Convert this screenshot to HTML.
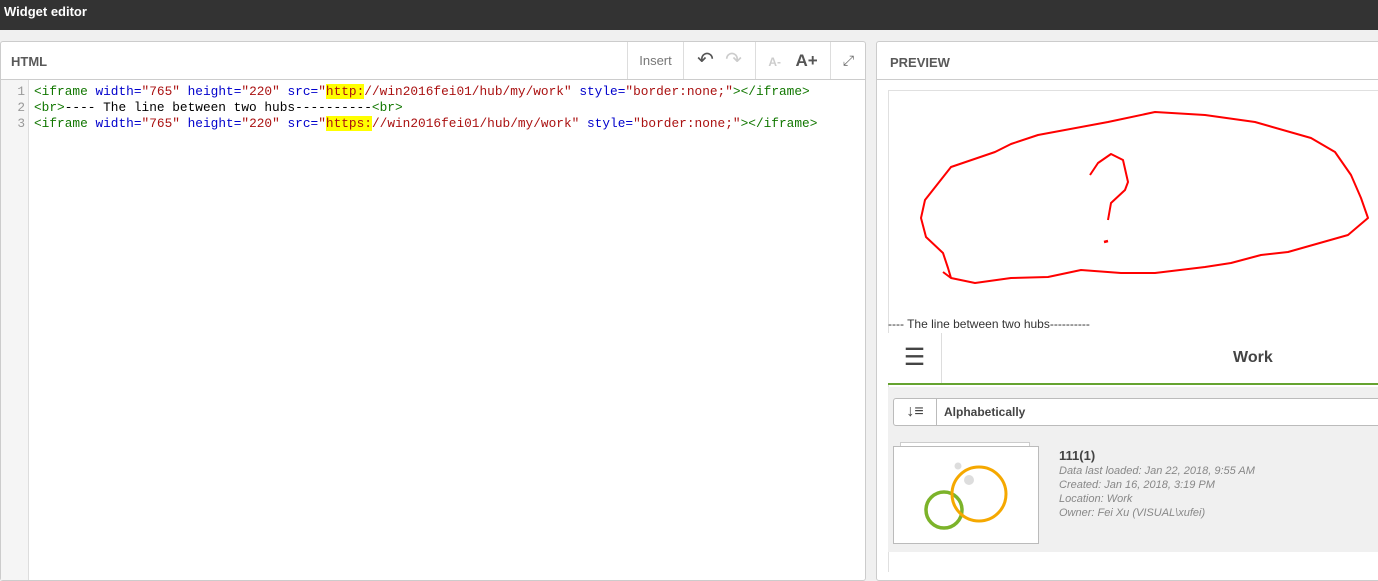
<!DOCTYPE html>
<html><head><meta charset="utf-8"><style>
*{margin:0;padding:0;box-sizing:border-box}
body{width:1378px;height:572px;overflow:hidden;background:#f0f0f0;font-family:"Liberation Sans",sans-serif;position:relative}
.top{position:absolute;left:0;top:0;width:1378px;height:30px;background:#333;color:#fff;font-weight:bold;font-size:13px;padding:4px 0 0 4px}
.lp{position:absolute;left:0;top:41px;width:866px;height:540px;background:#fff;border:1px solid #ccc;border-radius:3px}
.lh{height:38px;border-bottom:1px solid #ccc;position:relative}
.lh .t{position:absolute;left:10px;top:12px;font-weight:bold;font-size:13px;color:#595959}
.tb{position:absolute;top:0;height:37px;border-left:1px solid #ddd;color:#777;font-size:13px;text-align:center;line-height:37px}
.gut{position:absolute;left:0;top:38px;width:28px;bottom:0;background:#f5f5f5;border-right:1px solid #ddd}
.code{position:absolute;left:0;top:42px;font-family:"Liberation Mono",monospace;font-size:12.8px;line-height:16px;white-space:pre}
.ln{display:inline-block;width:24px;text-align:right;color:#999;margin-right:9px}
.g{color:#170}.b{color:#00c}.r{color:#a11}.k{color:#000}.y{background:#ff0}
.rp{position:absolute;left:876px;top:41px;width:510px;height:540px;background:#fff;border:1px solid #ccc;border-radius:3px}
.rh{height:38px;border-bottom:1px solid #ccc;font-weight:bold;font-size:13px;color:#595959;padding:13px 0 0 13px}
.pv{position:absolute;left:888px;top:90px;width:490px;height:482px;background:#fff;border-left:1px solid #e0e0e0;border-top:1px solid #e0e0e0}
</style></head><body>
<div class="top">Widget editor</div>
<div class="lp">
 <div class="lh"><span class="t">HTML</span>
  <div class="tb" style="left:626px;width:56px">Insert</div>
  <div class="tb" style="left:682px;width:72px;font-size:20px;color:#555"><span style="color:#555">&#8630;</span>&nbsp;&nbsp;<span style="color:#ccc">&#8631;</span></div>
  <div class="tb" style="left:754px;width:75px;font-weight:bold"><span style="color:#ccc;font-size:12px">A-</span>&nbsp;&nbsp;&nbsp;&nbsp;<span style="color:#555;font-size:17px">A+</span></div>
  <div class="tb" style="left:829px;width:36px;color:#666;font-size:14px">&#10530;</div>
 </div>
 <div class="gut"></div>
 <div class="code"><span class="ln">1</span><span class="g">&lt;iframe</span> <span class="b">width=</span><span class="r">"765"</span> <span class="b">height=</span><span class="r">"220"</span> <span class="b">src=</span><span class="r">"<span class="y">http:</span>//win2016fei01/hub/my/work"</span> <span class="b">style=</span><span class="r">"border:none;"</span><span class="g">&gt;&lt;/iframe&gt;</span>
<span class="ln">2</span><span class="g">&lt;br&gt;</span><span class="k">---- The line between two hubs----------</span><span class="g">&lt;br&gt;</span>
<span class="ln">3</span><span class="g">&lt;iframe</span> <span class="b">width=</span><span class="r">"765"</span> <span class="b">height=</span><span class="r">"220"</span> <span class="b">src=</span><span class="r">"<span class="y">https:</span>//win2016fei01/hub/my/work"</span> <span class="b">style=</span><span class="r">"border:none;"</span><span class="g">&gt;&lt;/iframe&gt;</span></div>
</div>
<div class="rp"><div class="rh">PREVIEW</div></div>
<div class="pv"></div>
<svg style="position:absolute;left:0;top:0" width="1378" height="572">
<path d="M943 272L951 278L975 283L1011 278L1048 277L1081 270L1121 273L1155 273L1205 267L1231 263L1261 255L1288 252L1348 235L1368 218L1361 198L1351 175L1335 152L1311 138L1255 122L1205 115L1155 112L1108 122L1038 135L1011 144L995 152L951 167L925 200L921 218L926 237L943 253L948 268L951 278" fill="none" stroke="#f00" stroke-width="2" stroke-linejoin="round"/>
<path d="M1090 175L1098 163L1111 154L1123 160L1128 182L1125 190L1111 203L1108 220" fill="none" stroke="#f00" stroke-width="2" stroke-linejoin="round"/>
<path d="M1104 242L1108 241" stroke="#f00" stroke-width="2.5"/>
</svg>
<div style="position:absolute;left:888px;top:317px;font-size:12px;color:#333">---- The line between two hubs----------</div>
<div style="position:absolute;left:888px;top:333px;width:490px;height:52px;background:#fff;border-bottom:2px solid #65a330">
 <div style="position:absolute;left:0;top:0;width:54px;height:50px;border-right:1px solid #ddd;text-align:center;line-height:50px;font-size:24px;color:#444">&#9776;</div>
 <div style="position:absolute;left:345px;top:16px;font-weight:bold;font-size:16px;color:#444">Work</div>
</div>
<div style="position:absolute;left:888px;top:387px;width:490px;height:165px;background:#f0f0f0"></div>
<div style="position:absolute;left:893px;top:398px;width:490px;height:28px;background:#fff;border:1px solid #bbb;border-radius:3px">
 <div style="position:absolute;left:0;top:0;width:43px;height:26px;border-right:1px solid #bbb;text-align:center;line-height:26px;font-size:16px;color:#444">&#8595;&#8801;</div>
 <div style="position:absolute;left:50px;top:6px;font-weight:bold;font-size:12px;color:#444">Alphabetically</div>
</div>
<div style="position:absolute;left:900px;top:442px;width:130px;height:4px;border:1px solid #ccc;border-bottom:none;background:#fff"></div>
<div style="position:absolute;left:893px;top:446px;width:146px;height:98px;background:#fff;border:1px solid #bbb"></div>
<svg style="position:absolute;left:893px;top:446px" width="146" height="98">
<circle cx="65" cy="20" r="3.5" fill="#ddd"/><circle cx="76" cy="34" r="5" fill="#ddd"/>
<circle cx="51" cy="64" r="18" fill="none" stroke="#7cb32a" stroke-width="3.5"/>
<circle cx="86" cy="48" r="27" fill="none" stroke="#f5a800" stroke-width="3"/>
</svg>
<div style="position:absolute;left:1059px;top:449px;font-size:12px;color:#444;line-height:14px">
<div style="font-weight:bold;font-size:13px;margin-bottom:1px">111(1)</div>
<div style="font-style:italic;font-size:11px;color:#888">Data last loaded: Jan 22, 2018, 9:55 AM<br>Created: Jan 16, 2018, 3:19 PM<br>Location: Work<br>Owner: Fei Xu (VISUAL\xufei)</div>
</div>
</body></html>
